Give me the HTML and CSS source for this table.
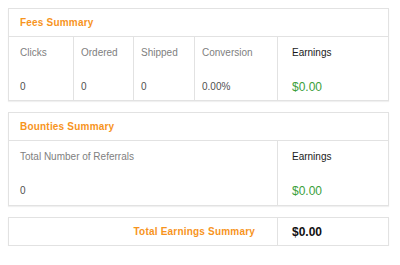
FILE: index.html
```html
<!DOCTYPE html>
<html>
<head>
<meta charset="utf-8">
<link rel="stylesheet" href="styles.css">
</head>
<body>
<div class="page">
  <section class="card">
    <div class="card-head">Fees Summary</div>
    <div class="grid fees">
      <div class="cell"><div class="label">Clicks</div><div class="value">0</div></div>
      <div class="cell"><div class="label">Ordered</div><div class="value">0</div></div>
      <div class="cell"><div class="label">Shipped</div><div class="value">0</div></div>
      <div class="cell"><div class="label">Conversion</div><div class="value">0.00%</div></div>
      <div class="cell earn"><div class="label dark">Earnings</div><div class="value money">$0.00</div></div>
    </div>
  </section>
  <section class="card">
    <div class="card-head">Bounties Summary</div>
    <div class="grid bounties">
      <div class="cell"><div class="label">Total Number of Referrals</div><div class="value">0</div></div>
      <div class="cell earn"><div class="label dark">Earnings</div><div class="value money">$0.00</div></div>
    </div>
  </section>
  <section class="card total">
    <div class="total-label">Total Earnings Summary</div>
    <div class="total-value">$0.00</div>
  </section>
</div>
</body>
</html>
```
FILE: styles.css
```css
* { box-sizing: border-box; }
body {
  margin: 0;
  background: #fff;
  font-family: "Liberation Sans", Arial, sans-serif;
}
.page {
  padding: 8px 11px 0 8px;
  display: flex;
  flex-direction: column;
  gap: 11px;
}
.card {
  border: 1px solid #e2e2e2;
  box-shadow: 0 1px 1px rgba(0,0,0,0.06);
  background: #fff;
}
.card-head {
  height: 28px;
  border-bottom: 1px solid #e2e2e2;
  padding: 0 11px 1px;
  display: flex;
  align-items: center;
  color: #f7941d;
  font-weight: bold;
  font-size: 10px;
  letter-spacing: 0.2px;
}
.grid {
  display: grid;
}
.fees { grid-template-columns: 65px 60px 61px 83px 1fr; height: 63px; }
.bounties { grid-template-columns: 269px 1fr; height: 64px; }
.cell {
  border-right: 1px solid #e2e2e2;
  padding: 10px 8px 0 7px;
  display: flex;
  flex-direction: column;
}
.cell:first-child { padding-left: 11px; }
.cell:last-child { border-right: none; }
.cell.earn { padding-left: 14px; }
.label {
  font-size: 10px;
  color: #808080;
  height: 33px;
}
.label.dark { color: #1a1a1a; }
.value {
  font-size: 10px;
  color: #505050;
  line-height: 14px;
}
.value.money {
  color: #3ba03b;
  font-size: 12px;
}
.total {
  display: grid;
  grid-template-columns: 269px 1fr;
  height: 29px;
}
.total-label {
  border-right: 1px solid #e2e2e2;
  display: flex;
  align-items: center;
  justify-content: flex-end;
  padding-right: 22px;
  color: #f7941d;
  font-weight: bold;
  font-size: 10px;
  letter-spacing: 0.2px;
}
.total-value {
  display: flex;
  align-items: center;
  padding-left: 14px;
  font-weight: bold;
  font-size: 12px;
  color: #111;
}
```
